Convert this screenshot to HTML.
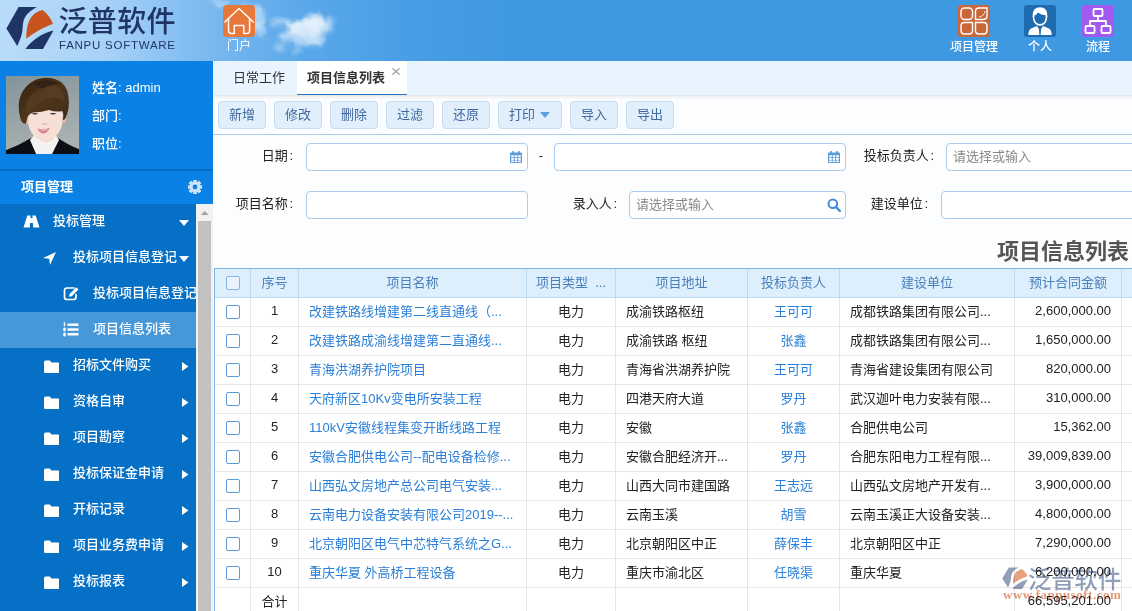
<!DOCTYPE html>
<html lang="zh-CN">
<head>
<meta charset="utf-8">
<title>项目信息列表</title>
<style>
*{box-sizing:border-box;margin:0;padding:0}
html,body{width:1132px;height:611px;overflow:hidden;background:#fff}
body{font-family:"Liberation Sans","Noto Sans CJK SC",sans-serif;font-size:13px;color:#222;position:relative}
.abs{position:absolute}
/* header */
#hdr{position:absolute;left:0;top:0;width:1132px;height:61px;background:linear-gradient(90deg,#b9dcfa 0px,#a6d1f7 110px,#7dbaf0 200px,#5ba8ea 300px,#4a9ee5 400px,#3f98e2 520px,#3f98e2 1132px);overflow:hidden}
#hdr .lbl{position:absolute;color:#fff;font-size:12px;line-height:14px;text-align:center;white-space:nowrap}
.logo-cn{position:absolute;left:58.500px;top:4px;font-size:29px;line-height:36px;color:#1f3566;font-weight:500;letter-spacing:0.35px;white-space:nowrap}
.logo-en{position:absolute;left:59px;top:38.5px;font-size:11.5px;line-height:13px;color:#1f3566;letter-spacing:0.75px;white-space:nowrap}
/* sidebar */
#side{position:absolute;left:0;top:61px;width:213px;height:550px;background:#0a82e5;overflow:hidden}
#user{position:absolute;left:0;top:0;width:213px;height:108px}
#user .t{position:absolute;left:92px;color:#fff;font-size:13px;line-height:18px;white-space:nowrap;font-weight:500}
#mh{position:absolute;left:0;top:108px;width:213px;height:35px;border-top:2px solid #0669bd;color:#fff;font-weight:bold;font-size:13px;line-height:31px;padding-left:21px}
#menu{position:absolute;left:0;top:143px;width:196px;height:407px;background:#0570c6;overflow:hidden}
#menu .it{position:absolute;left:0;width:196px;height:36px;color:#fff;font-size:13px;font-weight:500;line-height:34px;white-space:nowrap}
#menu .it.sel{background:#4698d9}
#menu .it span{position:absolute;top:0}
#menu svg{position:absolute}
#sb{position:absolute;left:196px;top:143px;width:17px;height:407px;background:#f1f1f1}
#sb .th{position:absolute;left:2px;top:17px;width:13px;height:391px;background:#c1c1c1}
/* main */
#tabs{position:absolute;left:213px;top:61px;width:919px;height:34px;background:#e8f4ff}
#tabs .tab{position:absolute;top:0;height:34px;line-height:33px;font-size:13px;color:#333;white-space:nowrap}
#tabs .act{background:#fff;border-bottom:1px solid #1f74c8;color:#333;font-weight:700}
#tb{position:absolute;left:213px;top:95px;width:919px;height:40px;background:#fcfdff;border-bottom:1px solid #a9cbee;background-image:linear-gradient(180deg,rgba(150,160,175,.28) 0,rgba(150,160,175,.1) 2px,rgba(150,160,175,0) 5px)}
.btn{position:absolute;top:6px;height:28px;border:1px solid #c5dcf3;background:#e1effc;border-radius:4px;color:#41699f;font-size:13px;line-height:26px;text-align:center;white-space:nowrap}
#form{position:absolute;left:213px;top:135px;width:919px;height:133px;background:#fbfdff}
.fl{position:absolute;font-size:13px;line-height:18px;color:#222;white-space:nowrap;text-align:right}
.in{position:absolute;height:28px;border:1px solid #a9cbee;border-radius:4px;background:#fff;font-size:13px;line-height:26px;color:#8a8a8a;padding-left:6px;white-space:nowrap;overflow:hidden}
#title{position:absolute;right:3px;top:237px;font-size:22px;line-height:30px;font-weight:bold;color:#555;white-space:nowrap}
/* table */
#grid{position:absolute;left:214px;top:268px;width:918px;height:343px;border-left:1px solid #7db6ea;border-top:1px solid #7db6ea;background:#fff;overflow:hidden}
#grid .row{position:absolute;left:0;width:918px;height:29px;border-bottom:1px solid #e6e6e6}
#grid .row.h{background:#ddeefc;border-bottom:1px solid #bcd9f5;color:#4a80ba}
#grid .row.alt{background:#fff}
.row.h .cb{border-color:#86b6e6;background:#eaf3fc}
.c{position:absolute;top:0;height:28px;line-height:27px;font-size:13px;white-space:nowrap;overflow:hidden;border-right:1px solid #e6e6e6}
.row.h .c{border-right:1px solid #bcd9f5;text-align:center}
.c0{left:0;width:36px}
.c1{left:36px;width:48px;text-align:center}
.c2{left:84px;width:228px;padding-left:10px;color:#2a7fd8}
.c3{left:312px;width:89px;text-align:center}
.c4{left:401px;width:132px;padding-left:10px}
.c5{left:533px;width:92px;text-align:center;color:#2a7fd8}
.c6{left:625px;width:175px;padding-left:10px}
.c7{left:800px;width:107px;text-align:right;padding-right:10px}
.c8{left:907px;width:20px}
.row.h .c2,.row.h .c5{color:inherit;padding-left:0}
.row.h .c4,.row.h .c6{padding-left:0}
.row.h .c7{text-align:center;padding-right:0}
.cb{position:absolute;left:11px;top:7px;width:14px;height:14px;border:1px solid #5b9bdc;border-radius:2px;background:#fff}
#wm{position:absolute;left:1001px;top:563px;width:125px;height:44px;opacity:.8;mix-blend-mode:multiply}
#wm .wcn{position:absolute;left:27px;top:1.500px;font-size:23.3px;line-height:30px;color:#7586a6;font-weight:500;white-space:nowrap}
#wm .wen{position:absolute;left:2px;top:25px;font-family:"Liberation Serif",serif;font-size:13px;line-height:14px;color:#dc7f58;font-weight:bold;white-space:nowrap;letter-spacing:.5px}
.fl i{font-style:normal;margin-left:1.5px}
.row:not(.h) .c1,.row:not(.h) .c7{line-height:25px}
.row .c1.cj{line-height:27px}
</style>
</head>
<body>
<div id="hdr">
<svg class="abs" style="left:0;top:0" width="1132" height="61" viewBox="0 0 1132 61">
  <defs>
    <filter id="cl" x="-20%" y="-30%" width="140%" height="160%">
      <feTurbulence type="fractalNoise" baseFrequency="0.09" numOctaves="3" seed="7" result="n"/>
      <feGaussianBlur in="SourceGraphic" stdDeviation="2.2" result="b"/>
      <feDisplacementMap in="b" in2="n" scale="9" xChannelSelector="R" yChannelSelector="G" result="d"/>
      <feGaussianBlur in="d" stdDeviation="0.7"/>
    </filter>
  </defs>
  <g filter="url(#cl)" fill="#fff" opacity=".88">
    <ellipse cx="256" cy="18" rx="9" ry="13" opacity=".5"/>
    <ellipse cx="260" cy="30" rx="6" ry="8" opacity=".4"/>
    <ellipse cx="220" cy="3" rx="9" ry="3" opacity=".45"/>
    <ellipse cx="246" cy="6" rx="8" ry="3" opacity=".4"/>
    <ellipse cx="305" cy="29" rx="17" ry="9" opacity=".85"/>
    <ellipse cx="314" cy="21" rx="12" ry="7" opacity=".85"/>
    <ellipse cx="324" cy="28" rx="8" ry="6" opacity=".7"/>
    <ellipse cx="292" cy="25" rx="9" ry="5" opacity=".7"/>
    <ellipse cx="279" cy="22" rx="8" ry="3" opacity=".5"/>
    <ellipse cx="288" cy="37" rx="9" ry="5" opacity=".6"/>
    <ellipse cx="304" cy="42" rx="12" ry="5" opacity=".55"/>
    <ellipse cx="318" cy="40" rx="8" ry="6" opacity=".6"/>
    <ellipse cx="280" cy="47" rx="6" ry="4" opacity=".4"/>
    <ellipse cx="296" cy="50" rx="5" ry="3" opacity=".35"/>
    <ellipse cx="329" cy="22" rx="4" ry="4" opacity=".5"/>
  </g>
</svg>
<svg class="abs" style="left:6px;top:6px" width="48" height="45" viewBox="0 0 48 45">
  <path d="M12.6 1 L30.8 1 C24 4.5 19 9.5 17.5 15 C16.3 20 16.8 24 15.8 28 C14.8 32 13 36 11.2 40 L0.4 22.5 Z" fill="#1f3566"/>
  <path d="M36.7 4.1 C41.5 8 45 12.5 47 18 C39 20.5 29 26 20.3 32.8 C20.3 24 21.5 14 27.4 8.7 C30 6.5 33 5 36.7 4.1 Z" fill="#c8531f"/>
  <path d="M47.5 24.5 L37 43 L19.5 43 C25 35 35 27.5 47.5 24.5 Z" fill="#1f3566"/>
</svg>
<div class="logo-cn">泛普软件</div>
<div class="logo-en">FANPU SOFTWARE</div>
<svg class="abs" style="left:223px;top:5px" width="32" height="32" viewBox="0 0 32 32">
  <rect x="0" y="0" width="32" height="32" rx="4" fill="#e8773a"/>
  <path d="M1.8 17 L16 3.5 L30.3 17" fill="none" stroke="#fff" stroke-width="1.5" stroke-linecap="round" stroke-linejoin="round"/>
  <path d="M5.5 13.5 L5.5 25.5 Q5.5 28.5 8.5 28.5 L11.3 28.5 L11.3 20.5 L20.8 20.5 L20.8 28.5 L23.6 28.5 Q26.6 28.5 26.6 25.5 L26.6 13.5" fill="none" stroke="#fff" stroke-width="1.5" stroke-linecap="round" stroke-linejoin="round"/>
</svg>
<div class="lbl" style="left:219px;width:40px;top:38.500px">门户</div>

<svg class="abs" style="left:958px;top:5px" width="32" height="32" viewBox="0 0 32 32">
  <rect width="32" height="32" rx="3" fill="#c8673a"/>
  <g fill="none" stroke="#fff" stroke-width="1.4">
    <rect x="3" y="3" width="11.5" height="11.5" rx="3.5"/>
    <path d="M17.5 14.5 L17.5 6.5 Q17.5 3 21 3 L29 3 L29 10.5 Q29 14.5 25 14.5 Z"/>
    <path d="M21 12 Q26 11.5 27 6" stroke-width="1" opacity=".8"/>
    <path d="M3 21 Q3 17.5 6.5 17.5 L14.5 17.5 L14.5 25.5 Q14.5 29 11 29 L6.5 29 Q3 29 3 25.5 Z"/>
    <path d="M17.5 17.5 L25.5 17.5 Q29 17.5 29 21 L29 25.5 Q29 29 25.5 29 L21 29 Q17.5 29 17.5 25.5 Z"/>
  </g>
</svg>
<div class="lbl" style="left:944px;width:60px;top:39.500px;font-weight:500">项目管理</div>

<svg class="abs" style="left:1024px;top:5px" width="32" height="32" viewBox="0 0 32 32">
  <rect width="32" height="32" rx="3" fill="#1e6bb0"/>
  <path d="M4.2 30 Q4.5 25 7 23.5 L13 21 L16 26 L19 21 L25 23.5 Q27.5 25 27.8 30 Z" fill="#fff"/>
  <path d="M16 23.5 L17 25 L16.6 30 L15.4 30 L15 25 Z" fill="#1e6bb0"/>
  <path d="M8.6 11 Q8.4 2.2 16 2.2 Q23.6 2.2 23.4 11 Q23.2 17 20 19.5 Q16 22 12 19.5 Q8.8 17 8.6 11 Z" fill="#fff"/>
  <path d="M10.4 10.5 Q12.5 10 14 7.5 Q17 10 21.6 10.2 Q22 15.5 19.3 18 Q16 20.2 12.7 18 Q10 15.5 10.4 10.5 Z" fill="#1e6bb0"/>
</svg>
<div class="lbl" style="left:1010px;width:60px;top:39.500px;font-weight:500">个人</div>

<svg class="abs" style="left:1082px;top:5px" width="32" height="32" viewBox="0 0 32 32">
  <rect width="32" height="32" rx="3" fill="#a259f0"/>
  <g fill="none" stroke="#fff" stroke-width="1.8" stroke-linejoin="round">
    <rect x="11.5" y="4" width="9" height="7" rx="1"/>
    <rect x="3.5" y="21" width="9" height="7" rx="1"/>
    <rect x="19.5" y="21" width="9" height="7" rx="1"/>
    <path d="M16 11 L16 16 M8 21 L8 16 L24 16 L24 21"/>
  </g>
</svg>
<div class="lbl" style="left:1068px;width:60px;top:39.500px;font-weight:500">流程</div>
</div>
<div id="side">
<div id="user">
<svg class="abs" style="left:6px;top:15px" width="73" height="78" viewBox="0 0 73 78">
  <defs>
    <filter id="ab" x="-20%" y="-20%" width="140%" height="140%"><feGaussianBlur stdDeviation="0.6"/></filter>
    <linearGradient id="abg" x1="0" y1="0" x2="0.3" y2="1"><stop offset="0" stop-color="#82949a"/><stop offset="0.55" stop-color="#98a4a6"/><stop offset="1" stop-color="#aab2b1"/></linearGradient>
    <linearGradient id="ah" x1="0" y1="0" x2="1" y2="1"><stop offset="0" stop-color="#33210f"/><stop offset="0.5" stop-color="#4e351d"/><stop offset="1" stop-color="#3e2a17"/></linearGradient>
    <clipPath id="ac"><rect width="73" height="78"/></clipPath>
  </defs>
  <rect width="73" height="78" fill="url(#abg)"/>
  <g clip-path="url(#ac)">
   <g filter="url(#ab)">
    <path d="M-2 80 L-2 75 Q12 70 25 62 L39 72 L52 62 Q62 69 75 74 L75 80 Z" fill="#111115"/>
    <path d="M24 64 L28.5 59 L49.5 59 L53 64 L45 80 L31 80 Z" fill="#f3f1f2"/>
    <path d="M31 56 L48 56 L48 62 Q39.5 70 31 62 Z" fill="#efcfbe"/>
    <path d="M21.5 38 Q21 53 28 60 Q39 70 50 60 Q57.5 53 57 38 Q56 27 39 27 Q22 27 21.5 38 Z" fill="#f6e0d5"/>
    <ellipse cx="20.5" cy="44" rx="2" ry="4" fill="#e6bda8"/>
    <ellipse cx="58" cy="43" rx="2" ry="4" fill="#e6bda8"/>
    <path d="M14 41 Q9 20 23 8 Q34 -1 49 3 Q61 7 62.5 21 Q64 33 59.5 42 Q58.5 44.5 57 44 Q58 39 56.5 35 Q50 36.5 43 34 Q36 36 27 36.5 Q22 38 21 43 Q20.5 47 19.5 48 Q15 47 14 41 Z" fill="url(#ah)"/>
    <path d="M19 30 Q26 11 47 9 Q57 12 59 26 Q50 19 40 23 Q29 28 21 38 Z" fill="#6a4828" opacity=".4"/>
    <path d="M28 7 Q42 1 54 8 Q44 8 36 13 Z" fill="#2e1d10" opacity=".7"/>
    <path d="M25.5 37.8 Q29 36.2 32.5 37.8 Q29 39.3 25.5 37.8 Z" fill="#2a2830"/>
    <path d="M43.5 37.8 Q47 36.2 50.5 37.8 Q47 39.3 43.5 37.8 Z" fill="#2a2830"/>
    <path d="M36.5 47.5 Q38.5 48.8 41 47.5" stroke="#dcae9b" stroke-width="1.2" fill="none"/>
    <path d="M31.5 52.5 Q38 54 44 51.5 Q41.5 57.5 37 57.5 Q33 57 31.5 52.5 Z" fill="#d8848c"/>
    <path d="M33 53.3 Q38 54.6 42.5 52.8 Q38 56 33 53.3 Z" fill="#fff"/>
   </g>
  </g>
</svg>

<div class="t" style="top:18px">姓名: admin</div>
<div class="t" style="top:46px">部门:</div>
<div class="t" style="top:74px">职位:</div>
</div>
<div id="mh">项目管理
<svg class="abs" style="left:188px;top:9px" width="14" height="14" viewBox="-7 -7 14 14"><g fill="#cfe3f7"><circle r="5.3"/><rect x="-1.8" y="-7.2" width="3.6" height="14.4" rx=".5" transform="rotate(0)"/><rect x="-1.8" y="-7.2" width="3.6" height="14.4" rx=".5" transform="rotate(45)"/><rect x="-1.8" y="-7.2" width="3.6" height="14.4" rx=".5" transform="rotate(90)"/><rect x="-1.8" y="-7.2" width="3.6" height="14.4" rx=".5" transform="rotate(135)"/></g><circle r="2.4" fill="#0a82e5"/></svg>
</div>
<div id="menu">
<div class="it" style="top:0px"><svg style="left:23px;top:11px" width="17" height="13" viewBox="0 0 17 13"><path d="M4.3 0.5 L7.6 0.5 L7.4 3 L9.6 3 L9.4 0.5 L12.7 0.5 L16.5 12.5 L10.2 12.5 L9.9 8 L7.1 8 L6.8 12.5 L0.5 12.5 Z" fill="#fff"/></svg><span style="left:53px">投标管理</span><svg style="left:179px;top:16px" width="10" height="6" viewBox="0 0 10 6"><path d="M0 0 L10 0 L5 6 Z" fill="#fff"/></svg></div>
<div class="it" style="top:36px"><svg style="left:42px;top:11px" width="15" height="15" viewBox="0 0 15 15"><path d="M14 1 L8 14 L7.2 7.8 L1 7 Z" fill="#fff"/></svg><span style="left:73px">投标项目信息登记</span><svg style="left:179px;top:16px" width="10" height="6" viewBox="0 0 10 6"><path d="M0 0 L10 0 L5 6 Z" fill="#fff"/></svg></div>
<div class="it" style="top:72px"><svg style="left:63px;top:10px" width="17" height="15" viewBox="0 0 17 15"><path d="M11 2 L4 2 Q1.5 2 1.5 4.5 L1.5 11 Q1.5 13.5 4 13.5 L10.5 13.5 Q13 13.5 13 11 L13 8.5" fill="none" stroke="#fff" stroke-width="1.7" stroke-linecap="round"/><path d="M6 10.8 L6.6 8 L13.3 1.3 L15.5 3.5 L8.8 10.2 Z" fill="#fff"/></svg><span style="left:93px">投标项目信息登记</span></div>
<div class="it sel" style="top:108px"><svg style="left:63px;top:10px" width="16" height="15" viewBox="0 0 16 15"><g fill="#fff"><rect x="4.5" y="1.5" width="11" height="2.4"/><rect x="4.5" y="6.3" width="11" height="2.4"/><rect x="4.5" y="11.1" width="11" height="2.4"/><rect x="0.8" y="0.3" width="1.4" height="3.8"/><rect x="0.3" y="5.4" width="2.4" height="3.8" rx="1"/><rect x="0.3" y="10.5" width="2.4" height="4" rx="1"/></g></svg><span style="left:93px">项目信息列表</span></div>
<div class="it" style="top:144px"><svg style="left:43.5px;top:11.5px" width="15.5" height="13.5" viewBox="0 0 16 13" preserveAspectRatio="none"><path d="M0 2 Q0 0.5 1.5 0.5 L5.5 0.5 Q6.5 0.5 7 1.5 L7.5 2.5 L14.5 2.5 Q16 2.5 16 4 L16 11 Q16 12.5 14.5 12.5 L1.5 12.5 Q0 12.5 0 11 Z" fill="#fff"/></svg><span style="left:73px">招标文件购买</span><svg style="left:182px;top:13.5px" width="6.5" height="9" viewBox="0 0 6 10" preserveAspectRatio="none"><path d="M0 0 L6 5 L0 10 Z" fill="#fff"/></svg></div>
<div class="it" style="top:180px"><svg style="left:43.5px;top:11.5px" width="15.5" height="13.5" viewBox="0 0 16 13" preserveAspectRatio="none"><path d="M0 2 Q0 0.5 1.5 0.5 L5.5 0.5 Q6.5 0.5 7 1.5 L7.5 2.5 L14.5 2.5 Q16 2.5 16 4 L16 11 Q16 12.5 14.5 12.5 L1.5 12.5 Q0 12.5 0 11 Z" fill="#fff"/></svg><span style="left:73px">资格自审</span><svg style="left:182px;top:13.5px" width="6.5" height="9" viewBox="0 0 6 10" preserveAspectRatio="none"><path d="M0 0 L6 5 L0 10 Z" fill="#fff"/></svg></div>
<div class="it" style="top:216px"><svg style="left:43.5px;top:11.5px" width="15.5" height="13.5" viewBox="0 0 16 13" preserveAspectRatio="none"><path d="M0 2 Q0 0.5 1.5 0.5 L5.5 0.5 Q6.5 0.5 7 1.5 L7.5 2.5 L14.5 2.5 Q16 2.5 16 4 L16 11 Q16 12.5 14.5 12.5 L1.5 12.5 Q0 12.5 0 11 Z" fill="#fff"/></svg><span style="left:73px">项目勘察</span><svg style="left:182px;top:13.5px" width="6.5" height="9" viewBox="0 0 6 10" preserveAspectRatio="none"><path d="M0 0 L6 5 L0 10 Z" fill="#fff"/></svg></div>
<div class="it" style="top:252px"><svg style="left:43.5px;top:11.5px" width="15.5" height="13.5" viewBox="0 0 16 13" preserveAspectRatio="none"><path d="M0 2 Q0 0.5 1.5 0.5 L5.5 0.5 Q6.5 0.5 7 1.5 L7.5 2.5 L14.5 2.5 Q16 2.5 16 4 L16 11 Q16 12.5 14.5 12.5 L1.5 12.5 Q0 12.5 0 11 Z" fill="#fff"/></svg><span style="left:73px">投标保证金申请</span><svg style="left:182px;top:13.5px" width="6.5" height="9" viewBox="0 0 6 10" preserveAspectRatio="none"><path d="M0 0 L6 5 L0 10 Z" fill="#fff"/></svg></div>
<div class="it" style="top:288px"><svg style="left:43.5px;top:11.5px" width="15.5" height="13.5" viewBox="0 0 16 13" preserveAspectRatio="none"><path d="M0 2 Q0 0.5 1.5 0.5 L5.5 0.5 Q6.5 0.5 7 1.5 L7.5 2.5 L14.5 2.5 Q16 2.5 16 4 L16 11 Q16 12.5 14.5 12.5 L1.5 12.5 Q0 12.5 0 11 Z" fill="#fff"/></svg><span style="left:73px">开标记录</span><svg style="left:182px;top:13.5px" width="6.5" height="9" viewBox="0 0 6 10" preserveAspectRatio="none"><path d="M0 0 L6 5 L0 10 Z" fill="#fff"/></svg></div>
<div class="it" style="top:324px"><svg style="left:43.5px;top:11.5px" width="15.5" height="13.5" viewBox="0 0 16 13" preserveAspectRatio="none"><path d="M0 2 Q0 0.5 1.5 0.5 L5.5 0.5 Q6.5 0.5 7 1.5 L7.5 2.5 L14.5 2.5 Q16 2.5 16 4 L16 11 Q16 12.5 14.5 12.5 L1.5 12.5 Q0 12.5 0 11 Z" fill="#fff"/></svg><span style="left:73px">项目业务费申请</span><svg style="left:182px;top:13.5px" width="6.5" height="9" viewBox="0 0 6 10" preserveAspectRatio="none"><path d="M0 0 L6 5 L0 10 Z" fill="#fff"/></svg></div>
<div class="it" style="top:360px"><svg style="left:43.5px;top:11.5px" width="15.5" height="13.5" viewBox="0 0 16 13" preserveAspectRatio="none"><path d="M0 2 Q0 0.5 1.5 0.5 L5.5 0.5 Q6.5 0.5 7 1.5 L7.5 2.5 L14.5 2.5 Q16 2.5 16 4 L16 11 Q16 12.5 14.5 12.5 L1.5 12.5 Q0 12.5 0 11 Z" fill="#fff"/></svg><span style="left:73px">投标报表</span><svg style="left:182px;top:13.5px" width="6.5" height="9" viewBox="0 0 6 10" preserveAspectRatio="none"><path d="M0 0 L6 5 L0 10 Z" fill="#fff"/></svg></div>
<div class="it" style="top:396px"><span style="left:73px"></span></div>
</div>
<div id="sb"><div class="th"></div>
<svg class="abs" style="left:5px;top:7px" width="7.5" height="4" viewBox="0 0 9 5" preserveAspectRatio="none"><path d="M0 5 L4.5 0 L9 5 Z" fill="#a3a3a3"/></svg>
</div>
</div>
<div id="tabs">
<div class="tab" style="left:20px">日常工作</div>
<div class="tab act" style="left:84px;width:110px;padding-left:10px">项目信息列表</div>
<svg class="abs" style="left:179px;top:7px" width="8" height="7" viewBox="0 0 8 7"><path d="M0.4 0.3 L7.6 6.7 M7.6 0.3 L0.4 6.7" stroke="#999" stroke-width="1.1"/></svg>
</div>
<div id="tb"><div class="btn" style="left:5px;width:48px">新增</div><div class="btn" style="left:61px;width:48px">修改</div><div class="btn" style="left:117px;width:48px">删除</div><div class="btn" style="left:173px;width:48px">过滤</div><div class="btn" style="left:229px;width:48px">还原</div><div class="btn" style="left:285px;width:64px;padding-right:16px">打印<svg class="abs" style="left:41px;top:9.5px" width="10" height="6" viewBox="0 0 10 6"><path d="M0 0 L10 0 L5 6 Z" fill="#5b9fe0"/></svg></div><div class="btn" style="left:357px;width:48px">导入</div><div class="btn" style="left:413px;width:48px">导出</div></div>
<div id="form">
<div class="fl" style="left:0;width:80px;top:12px">日期<i>:</i></div>
<div class="in" style="left:93px;top:8px;width:222px"></div><svg class="abs" style="left:297px;top:16px" width="12" height="12" viewBox="0 0 12 12"><g fill="#5a9bdc"><rect x="0" y="1.5" width="12" height="10.5" rx="1"/><rect x="2.2" y="0" width="1.8" height="3" rx=".6"/><rect x="8" y="0" width="1.8" height="3" rx=".6"/></g><g fill="#fff"><rect x="1.2" y="4.2" width="2.6" height="2"/><rect x="4.7" y="4.2" width="2.6" height="2"/><rect x="8.2" y="4.2" width="2.6" height="2"/><rect x="1.2" y="6.9" width="2.6" height="2"/><rect x="4.7" y="6.9" width="2.6" height="2"/><rect x="8.2" y="6.9" width="2.6" height="2"/><rect x="1.2" y="9.5" width="2.6" height="1.6"/><rect x="4.7" y="9.5" width="2.6" height="1.6"/><rect x="8.2" y="9.5" width="2.6" height="1.6"/></g></svg>
<div class="fl" style="left:324px;width:8px;top:12px;text-align:center">-</div>
<div class="in" style="left:341px;top:8px;width:292px"></div><svg class="abs" style="left:615px;top:16px" width="12" height="12" viewBox="0 0 12 12"><g fill="#5a9bdc"><rect x="0" y="1.5" width="12" height="10.5" rx="1"/><rect x="2.2" y="0" width="1.8" height="3" rx=".6"/><rect x="8" y="0" width="1.8" height="3" rx=".6"/></g><g fill="#fff"><rect x="1.2" y="4.2" width="2.6" height="2"/><rect x="4.7" y="4.2" width="2.6" height="2"/><rect x="8.2" y="4.2" width="2.6" height="2"/><rect x="1.2" y="6.9" width="2.6" height="2"/><rect x="4.7" y="6.9" width="2.6" height="2"/><rect x="8.2" y="6.9" width="2.6" height="2"/><rect x="1.2" y="9.5" width="2.6" height="1.6"/><rect x="4.7" y="9.5" width="2.6" height="1.6"/><rect x="8.2" y="9.5" width="2.6" height="1.6"/></g></svg>
<div class="fl" style="left:640px;width:81px;top:12px">投标负责人<i>:</i></div>
<div class="in" style="left:733px;top:8px;width:200px">请选择或输入</div>
<div class="fl" style="left:0;width:80px;top:60px">项目名称<i>:</i></div>
<div class="in" style="left:93px;top:56px;width:222px"></div>
<div class="fl" style="left:340px;width:64px;top:60px">录入人<i>:</i></div>
<div class="in" style="left:416px;top:56px;width:217px">请选择或输入</div><svg class="abs" style="left:614px;top:63px" width="14" height="14" viewBox="0 0 14 14"><circle cx="5.8" cy="5.8" r="4.3" fill="none" stroke="#3f8ddb" stroke-width="2"/><path d="M9 9 L12.8 12.8" stroke="#3f8ddb" stroke-width="2.4" stroke-linecap="round"/></svg>
<div class="fl" style="left:640px;width:75px;top:60px">建设单位<i>:</i></div>
<div class="in" style="left:728px;top:56px;width:200px"></div>
</div>
<div id="title">项目信息列表</div>
<div id="grid">
<div class="row h" style="top:0"><div class="c c0"><i class="cb"></i></div><div class="c c1">序号</div><div class="c c2">项目名称</div><div class="c c3">项目类型&nbsp; ...</div><div class="c c4">项目地址</div><div class="c c5">投标负责人</div><div class="c c6">建设单位</div><div class="c c7">预计合同金额</div><div class="c c8"></div></div>
<div class="row" style="top:29px"><div class="c c0"><i class="cb"></i></div><div class="c c1">1</div><div class="c c2">改建铁路线增建第二线直通线（...</div><div class="c c3">电力</div><div class="c c4">成渝铁路枢纽</div><div class="c c5">王可可</div><div class="c c6">成都铁路集团有限公司...</div><div class="c c7">2,600,000.00</div><div class="c c8"></div></div>
<div class="row alt" style="top:58px"><div class="c c0"><i class="cb"></i></div><div class="c c1">2</div><div class="c c2">改建铁路成渝线增建第二直通线...</div><div class="c c3">电力</div><div class="c c4">成渝铁路 枢纽</div><div class="c c5">张鑫</div><div class="c c6">成都铁路集团有限公司...</div><div class="c c7">1,650,000.00</div><div class="c c8"></div></div>
<div class="row" style="top:87px"><div class="c c0"><i class="cb"></i></div><div class="c c1">3</div><div class="c c2">青海洪湖养护院项目</div><div class="c c3">电力</div><div class="c c4">青海省洪湖养护院</div><div class="c c5">王可可</div><div class="c c6">青海省建设集团有限公司</div><div class="c c7">820,000.00</div><div class="c c8"></div></div>
<div class="row alt" style="top:116px"><div class="c c0"><i class="cb"></i></div><div class="c c1">4</div><div class="c c2">天府新区10Kv变电所安装工程</div><div class="c c3">电力</div><div class="c c4">四港天府大道</div><div class="c c5">罗丹</div><div class="c c6">武汉迦叶电力安装有限...</div><div class="c c7">310,000.00</div><div class="c c8"></div></div>
<div class="row" style="top:145px"><div class="c c0"><i class="cb"></i></div><div class="c c1">5</div><div class="c c2">110kV安徽线程集变开断线路工程</div><div class="c c3">电力</div><div class="c c4">安徽</div><div class="c c5">张鑫</div><div class="c c6">合肥供电公司</div><div class="c c7">15,362.00</div><div class="c c8"></div></div>
<div class="row alt" style="top:174px"><div class="c c0"><i class="cb"></i></div><div class="c c1">6</div><div class="c c2">安徽合肥供电公司--配电设备检修...</div><div class="c c3">电力</div><div class="c c4">安徽合肥经济开...</div><div class="c c5">罗丹</div><div class="c c6">合肥东阳电力工程有限...</div><div class="c c7">39,009,839.00</div><div class="c c8"></div></div>
<div class="row" style="top:203px"><div class="c c0"><i class="cb"></i></div><div class="c c1">7</div><div class="c c2">山西弘文房地产总公司电气安装...</div><div class="c c3">电力</div><div class="c c4">山西大同市建国路</div><div class="c c5">王志远</div><div class="c c6">山西弘文房地产开发有...</div><div class="c c7">3,900,000.00</div><div class="c c8"></div></div>
<div class="row alt" style="top:232px"><div class="c c0"><i class="cb"></i></div><div class="c c1">8</div><div class="c c2">云南电力设备安装有限公司2019--...</div><div class="c c3">电力</div><div class="c c4">云南玉溪</div><div class="c c5">胡雪</div><div class="c c6">云南玉溪正大设备安装...</div><div class="c c7">4,800,000.00</div><div class="c c8"></div></div>
<div class="row" style="top:261px"><div class="c c0"><i class="cb"></i></div><div class="c c1">9</div><div class="c c2">北京朝阳区电气中芯特气系统之G...</div><div class="c c3">电力</div><div class="c c4">北京朝阳区中正</div><div class="c c5">薛保丰</div><div class="c c6">北京朝阳区中正</div><div class="c c7">7,290,000.00</div><div class="c c8"></div></div>
<div class="row alt" style="top:290px"><div class="c c0"><i class="cb"></i></div><div class="c c1">10</div><div class="c c2">重庆华夏 外高桥工程设备</div><div class="c c3">电力</div><div class="c c4">重庆市渝北区</div><div class="c c5">任晓渠</div><div class="c c6">重庆华夏</div><div class="c c7">6,200,000.00</div><div class="c c8"></div></div>
<div class="row" style="top:319px"><div class="c c0"></div><div class="c c1 cj">合计</div><div class="c c2"></div><div class="c c3"></div><div class="c c4"></div><div class="c c5"></div><div class="c c6"></div><div class="c c7">66,595,201.00</div><div class="c c8"></div></div>
</div>

<div id="wm">
<svg class="abs" style="left:1px;top:4px" width="26" height="23" viewBox="0 0 48 45" preserveAspectRatio="none">
  <path d="M12.6 1 L30.8 1 C24 4.5 19 9.5 17.5 15 C16.3 20 16.8 24 15.8 28 C14.8 32 13 36 11.2 40 L0.4 22.5 Z" fill="#7586a6"/>
  <path d="M36.7 4.1 C41.5 8 45 12.5 47 18 C39 20.5 29 26 20.3 32.8 C20.3 24 21.5 14 27.4 8.7 C30 6.5 33 5 36.7 4.1 Z" fill="#e58a5c"/>
  <path d="M47.5 24.5 L37 43 L19.5 43 C25 35 35 27.5 47.5 24.5 Z" fill="#7586a6"/>
</svg>
<div class="wcn">泛普软件</div>
<div class="wen">www.fanpusoft.com</div>
</div>

</body>
</html>
